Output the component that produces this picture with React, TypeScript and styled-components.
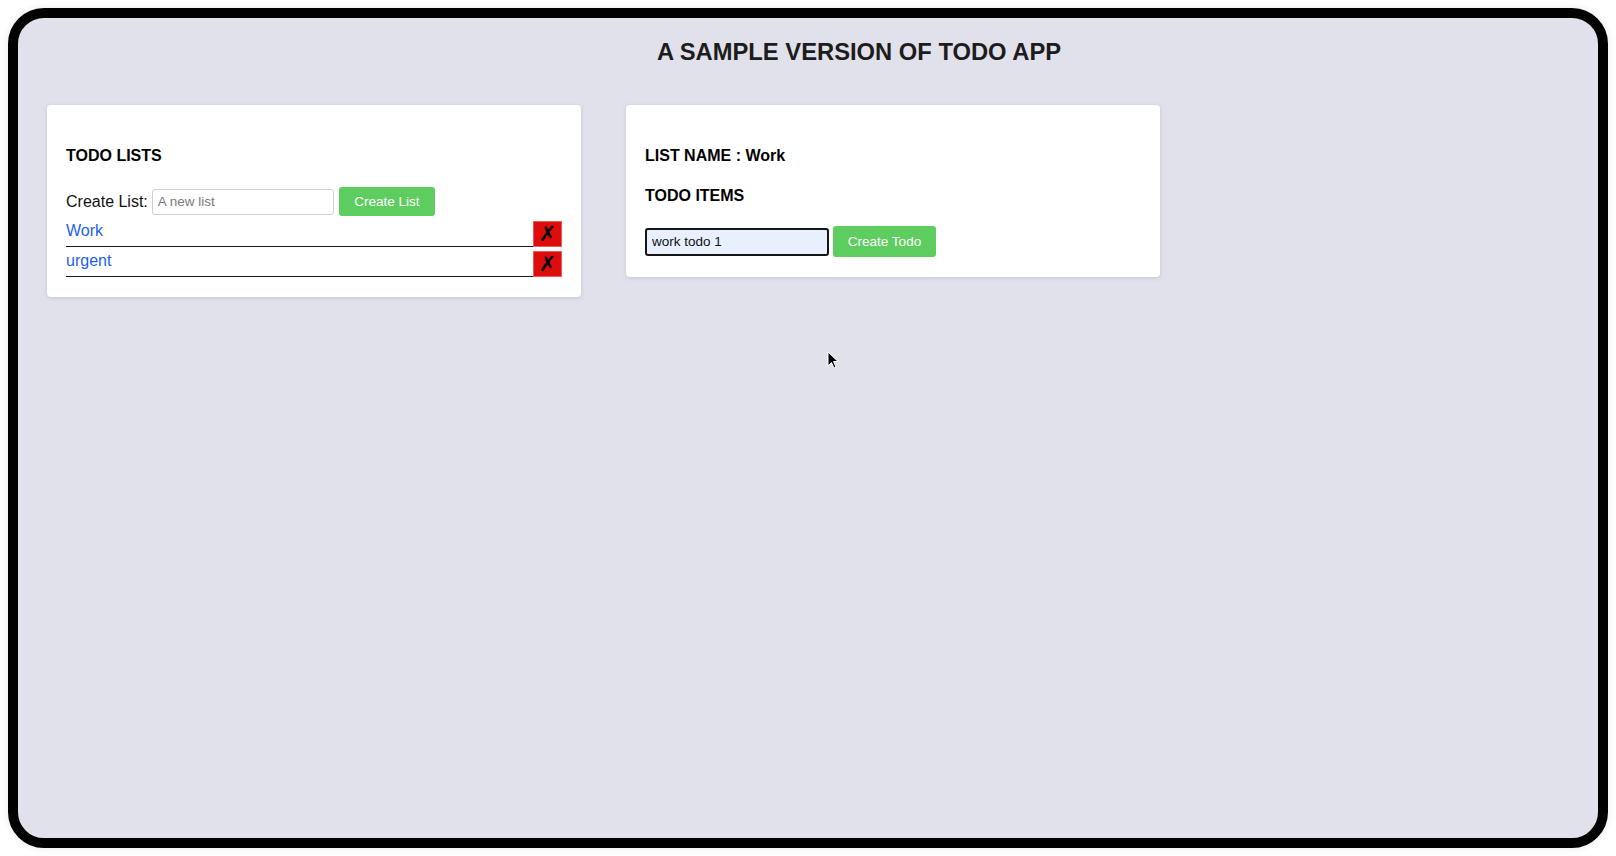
import styled, { createGlobalStyle } from "styled-components";

const GlobalStyle = createGlobalStyle`
    html, body {
        margin: 0;
        padding: 0;
        background: #ffffff;
    }
    body {
        padding: 8px;
        font-family: "Liberation Sans", Arial, sans-serif;
    }
    * {
        box-sizing: border-box;
    }
`

const StyledFrame = styled.div`
    position: relative;
    width: 1600px;
    height: 840px;
    border: 10px solid #000;
    border-radius: 36px;
    background-color: #e1e1ec;
    box-shadow: 0 0 6px 2px rgba(0, 0, 0, 0.06);
    overflow: hidden;
    padding: 20px 19px 0 19px;
`
const StyledTitle = styled.h1`
    margin: 0;
    padding-left: 102px;
    text-align: center;
    font-size: 23.75px;
    line-height: 28px;
    font-weight: 700;
    color: #1c1c1c;
`
const StyledCards = styled.div`
    display: flex;
    align-items: flex-start;
    gap: 45px;
    margin-top: 39px;
    padding-left: 10px;
`
const StyledCard = styled.div<{ $pb: number }>`
    width: 534px;
    background-color: #fff;
    border-radius: 4px;
    box-shadow: 0 1px 4px rgba(0, 0, 0, 0.12);
    padding: 20px 19px ${(p) => p.$pb}px 19px;
`
const StyledHeading = styled.h3<{ $mt: number; $mb: number }>`
    margin: ${(p) => p.$mt}px 0 ${(p) => p.$mb}px 0;
    font-size: 16px;
    line-height: 18px;
    font-weight: 700;
    color: #000;
`
const StyledFormRow = styled.div<{ $gap: number }>`
    display: flex;
    align-items: center;
    gap: ${(p) => p.$gap}px;
`
const StyledLabel = styled.label`
    font-size: 16px;
    color: #111;
    margin-right: -1px;
`
const StyledInput = styled.input<{ $filled?: boolean }>`
    width: ${(p) => (p.$filled ? 184 : 182)}px;
    height: ${(p) => (p.$filled ? 28 : 26)}px;
    padding: 0 5px;
    font-family: "Liberation Sans", Arial, sans-serif;
    font-size: 13.5px;
    color: #111;
    border: ${(p) => (p.$filled ? "2px solid #151515" : "1px solid #d0d0d0")};
    border-radius: 3px;
    background-color: ${(p) => (p.$filled ? "#e8f0fe" : "#fff")};
    outline: none;

    &::placeholder {
        color: #7a7a7a;
    }
`
const StyledGreenButton = styled.button<{ $w: number; $h: number }>`
    width: ${(p) => p.$w}px;
    height: ${(p) => p.$h}px;
    border: none;
    border-radius: 3px;
    background-color: #5dcd60;
    color: #fff;
    font-family: "Liberation Sans", Arial, sans-serif;
    font-size: 13.5px;
    padding: 0;
`
const StyledList = styled.ul`
    list-style: none;
    margin: 5px 0 0 0;
    padding: 0;
    display: flex;
    flex-direction: column;
    gap: 4px;
`
const StyledListRow = styled.li`
    display: flex;
    align-items: flex-end;
    height: 26px;
`
const StyledListLink = styled.a`
    flex: 1;
    height: 100%;
    font-size: 16px;
    line-height: 20px;
    color: #1d5ff0;
    text-decoration: none;
    border-bottom: 1px solid #1a1a1a;
`
const StyledDeleteButton = styled.button`
    width: 29px;
    height: 26px;
    border: 1px solid #ef5a5a;
    background-color: #de0d0d;
    color: #000;
    font-size: 21px;
    line-height: 1;
    padding: 0;
    font-family: "DejaVu Sans", sans-serif;
`
const StyledCursor = styled.svg`
    position: absolute;
    left: 809px;
    top: 333px;
`

const lists = ["Work", "urgent"];

export default function App() {
    return (
        <>
            <GlobalStyle />
            <StyledFrame>
                <StyledTitle>A SAMPLE VERSION OF TODO APP</StyledTitle>
                <StyledCards>
                    <StyledCard $pb={20}>
                        <StyledHeading $mt={22} $mb={22}>TODO LISTS</StyledHeading>
                        <StyledFormRow $gap={5}>
                            <StyledLabel>Create List:</StyledLabel>
                            <StyledInput placeholder="A new list" />
                            <StyledGreenButton $w={96} $h={29}>Create List</StyledGreenButton>
                        </StyledFormRow>
                        <StyledList>
                            {lists.map((name) => (
                                <StyledListRow key={name}>
                                    <StyledListLink href="#">{name}</StyledListLink>
                                    <StyledDeleteButton>✗</StyledDeleteButton>
                                </StyledListRow>
                            ))}
                        </StyledList>
                    </StyledCard>
                    <StyledCard $pb={20}>
                        <StyledHeading $mt={22} $mb={22}>LIST NAME : Work</StyledHeading>
                        <StyledHeading $mt={0} $mb={21}>TODO ITEMS</StyledHeading>
                        <StyledFormRow $gap={4}>
                            <StyledInput $filled defaultValue="work todo 1" />
                            <StyledGreenButton $w={103} $h={31}>Create Todo</StyledGreenButton>
                        </StyledFormRow>
                    </StyledCard>
                </StyledCards>
                <StyledCursor width="12" height="20" viewBox="0 0 12 20">
                    <path d="M1 1 L1 15 L4.5 11.5 L7 17 L9 16 L6.5 10.5 L11 10.5 Z" fill="#000" stroke="#fff" strokeWidth="1" />
                </StyledCursor>
            </StyledFrame>
        </>
    );
}
